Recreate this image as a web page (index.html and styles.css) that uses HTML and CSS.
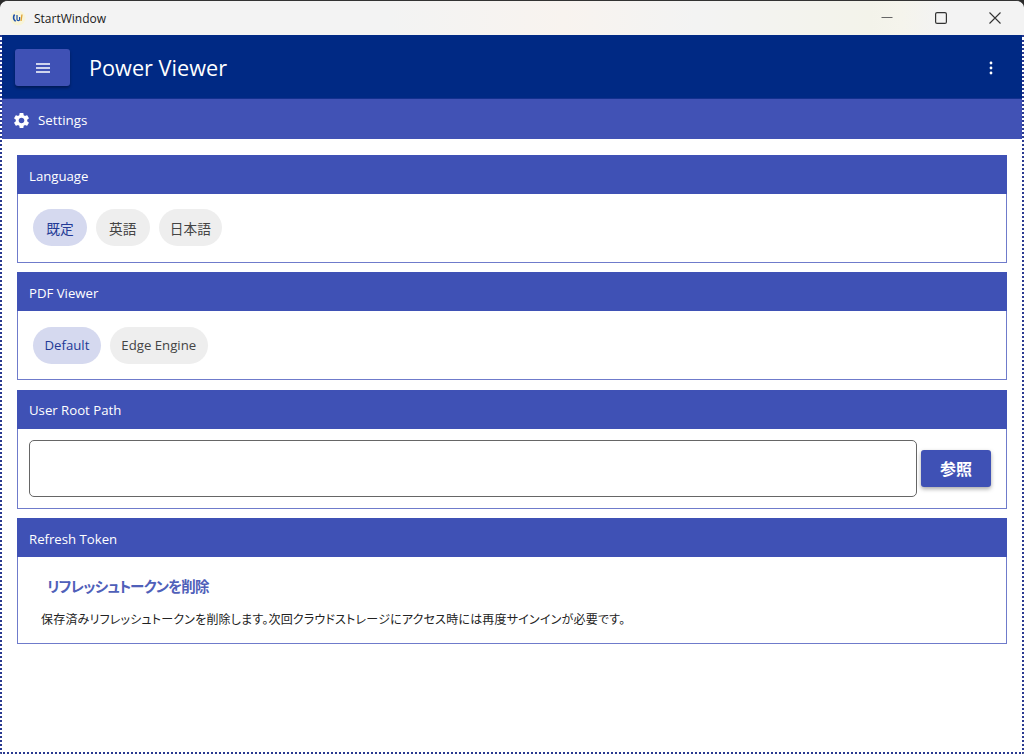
FILE: index.html
```html
<!DOCTYPE html>
<html lang="ja">
<head>
<meta charset="utf-8">
<title>StartWindow</title>
<link rel="stylesheet" href="styles.css">
</head>
<body>
<div class="window">
  <header class="titlebar">
    <div class="title-left">
      <svg class="app-icon" width="16" height="16" viewBox="0 0 16 16"><circle cx="8" cy="8" r="7.5" fill="#f8f4d8"/><path d="M4.6 4.5C3 6.5 3.2 10 5.6 11.2" fill="none" stroke="#1c4fa8" stroke-width="1.6"/><path d="M7 5v4.5c0 1.6 2.6 1.6 2.6 0V7" fill="none" stroke="#1c4fa8" stroke-width="1.2"/><path d="M12 4.5L11 11" fill="none" stroke="#e0a030" stroke-width="1.3"/></svg>
      <span class="title-text">StartWindow</span>
    </div>
    <div class="caption">
      <span class="cap-btn"><svg width="12" height="12" viewBox="0 0 12 12"><path d="M0.5 5.5h11" stroke="#666" stroke-width="1.2" fill="none"/></svg></span>
      <span class="cap-btn"><svg width="12" height="12" viewBox="0 0 12 12"><rect x="0.6" y="0.6" width="10.8" height="10.8" rx="1.5" stroke="#333" stroke-width="1.2" fill="none"/></svg></span>
      <span class="cap-btn"><svg width="12" height="12" viewBox="0 0 12 12"><path d="M0.5 0.5l11 11M11.5 0.5l-11 11" stroke="#333" stroke-width="1.1" fill="none"/></svg></span>
    </div>
  </header>
  <div class="content">
    <div class="appbar">
      <button class="menu-btn" type="button"><svg width="14" height="10" viewBox="0 0 14 10"><path d="M0 1h14M0 5h14M0 9h14" stroke="#fff" stroke-width="1.3" fill="none"/></svg></button>
      <h1 class="app-title">Power Viewer</h1>
      <svg class="more" width="4" height="14" viewBox="0 0 4 14"><circle cx="2" cy="2" r="1.4" fill="#fff"/><circle cx="2" cy="7" r="1.4" fill="#fff"/><circle cx="2" cy="12" r="1.4" fill="#fff"/></svg>
    </div>
    <div class="subbar">
      <svg width="19" height="19" viewBox="0 0 24 24"><path fill="#fff" d="M19.14 12.94c.04-.3.06-.61.06-.94s-.02-.64-.07-.94l2.03-1.58c.18-.14.23-.41.12-.61l-1.92-3.32c-.12-.22-.37-.29-.59-.22l-2.39.96c-.5-.38-1.03-.7-1.62-.94l-.36-2.54c-.04-.24-.24-.41-.48-.41h-3.84c-.24 0-.43.17-.47.41l-.36 2.54c-.59.24-1.13.57-1.62.94l-2.39-.96c-.22-.08-.47 0-.59.22L2.74 8.87c-.12.21-.08.47.12.61l2.03 1.58c-.05.3-.09.63-.09.94s.02.64.07.94l-2.03 1.58c-.18.14-.23.41-.12.61l1.92 3.32c.12.22.37.29.59.22l2.39-.96c.5.38 1.03.7 1.62.94l.36 2.54c.05.24.24.41.48.41h3.84c.24 0 .44-.17.47-.41l.36-2.54c.59-.24 1.13-.56 1.62-.94l2.39.96c.22.08.47 0 .59-.22l1.92-3.32c.12-.22.07-.47-.12-.61l-2.01-1.58zM12 15.6c-1.98 0-3.6-1.62-3.6-3.6s1.62-3.6 3.6-3.6 3.6 1.62 3.6 3.6-1.62 3.6-3.6 3.6z"/></svg>
      <span>Settings</span>
    </div>
    <main class="cards">
      <section class="card">
        <div class="card-head">Language</div>
        <div class="card-body chips">
          <span class="chip chip-ja selected">既定</span>
          <span class="chip chip-ja">英語</span>
          <span class="chip chip-ja chip-wide">日本語</span>
        </div>
      </section>
      <section class="card">
        <div class="card-head">PDF Viewer</div>
        <div class="card-body chips">
          <span class="chip selected">Default</span>
          <span class="chip">Edge Engine</span>
        </div>
      </section>
      <section class="card">
        <div class="card-head">User Root Path</div>
        <div class="card-body path-row">
          <div class="path-input"></div>
          <button class="browse" type="button">参照</button>
        </div>
      </section>
      <section class="card">
        <div class="card-head">Refresh Token</div>
        <div class="card-body token">
          <div class="token-link">リフレッシュトークンを削除</div>
          <p class="token-desc">保存済みリフレッシュトークンを削除します。次回クラウドストレージにアクセス時には再度サインインが必要です。</p>
        </div>
      </section>
    </main>
  </div>
</div>
</body>
</html>
```
FILE: styles.css
```css
* { box-sizing: border-box; }
html, body { margin: 0; height: 754px; overflow: hidden; background: #2b2b2b; }
body { font-family: "Open Sans", "Noto Sans CJK JP", sans-serif; }
.window {
  width: 1024px; height: 754px; display: flex; flex-direction: column;
  border-radius: 8px 8px 2px 2px; overflow: hidden; background: #fff;
  border-top: 1px solid #333;
}
.titlebar {
  height: 34px; flex: none; display: flex; justify-content: space-between; align-items: center;
  background: linear-gradient(90deg, #f3f3f3 0, #f3f3f3 38%, #f8f3ef 55%, #f3f3f3 68%, #f3f3ea 85%, #f5f4ec 88%, #f3f3f3 92%);
  padding-left: 10px; padding-right: 2px;
}
.title-left { display: flex; align-items: center; gap: 8px; }
.title-text { font-size: 12px; color: #1a1a1a; }
.caption { display: flex; }
.cap-btn { width: 54px; height: 34px; display: flex; align-items: center; justify-content: center; }
.content {
  flex: 1; display: flex; flex-direction: column; background: #fff;
  border: 2px dotted #2a3a90; border-top: 0;
}
.appbar {
  height: 64px; flex: none; display: flex; align-items: center; background: #002984;
  padding: 2px 29px 0 13px; border-bottom: 1px solid #14308f;
}
.menu-btn {
  width: 55px; height: 37px; border: 0; border-radius: 3px; background: #3f51b5; padding: 0;
  display: flex; align-items: center; justify-content: center;
  box-shadow: 0 2px 3px rgba(0,0,0,.35);
}
.app-title { flex: 1; margin: 0 0 0 19px; font-size: 21.7px; font-weight: 400; color: #fff; }
.subbar {
  height: 40px; flex: none; display: flex; align-items: center; gap: 7px; padding: 2px 0 0 10px;
  background: #4152b5; color: #fff; font-size: 13.3px;
}
.cards { flex: 1; display: flex; flex-direction: column; gap: 9.4px; padding: 16px 15px 0; }
.card { border: 1px solid #6f7bcb; border-top: 0; background: #fff; }
.card-head {
  height: 39px; display: flex; align-items: center; padding: 2px 0 0 12px;
  background: #3f51b5; color: #fff; font-size: 13.2px; margin: 0 -1px 0 -1px;
}
.chips { display: flex; gap: 9px; padding: 15.4px 15px 15px; height: 68px; }
.chip {
  height: 37px; padding: 0 11.5px; border-radius: 19px; background: #eeeeee; color: #444;
  display: flex; align-items: center; font-size: 13.2px;
}
.chip-ja { padding: 0 13.2px; font-size: 13.7px; }
.chip-wide { padding: 0 11.3px; }
.chip.selected { background: #d5d9ef; color: #233a96; }
.path-row { display: flex; align-items: center; gap: 4px; padding: 0 15px 0 11px; height: 79px; }
.path-input { flex: 1; height: 57px; border: 1.5px solid #666; border-radius: 5px; }
.browse {
  width: 70px; height: 37px; border: 0; border-radius: 3px; background: #3f51b5; color: #fff;
  font: 700 16px "Noto Sans CJK JP", sans-serif; box-shadow: 0 2px 4px rgba(0,0,0,.35);
}
.token { height: 86px; padding: 19px 0 0 23px; }
.token-link { margin-left: 6px; font-size: 14.5px; font-weight: 700; line-height: 22px; color: #4f60b9; font-feature-settings: "palt"; letter-spacing: -0.8px; }
.token-desc { margin: 13px 0 0; font-size: 12px; line-height: 18px; color: #222; font-feature-settings: "palt"; letter-spacing: 0.2px; }
```
